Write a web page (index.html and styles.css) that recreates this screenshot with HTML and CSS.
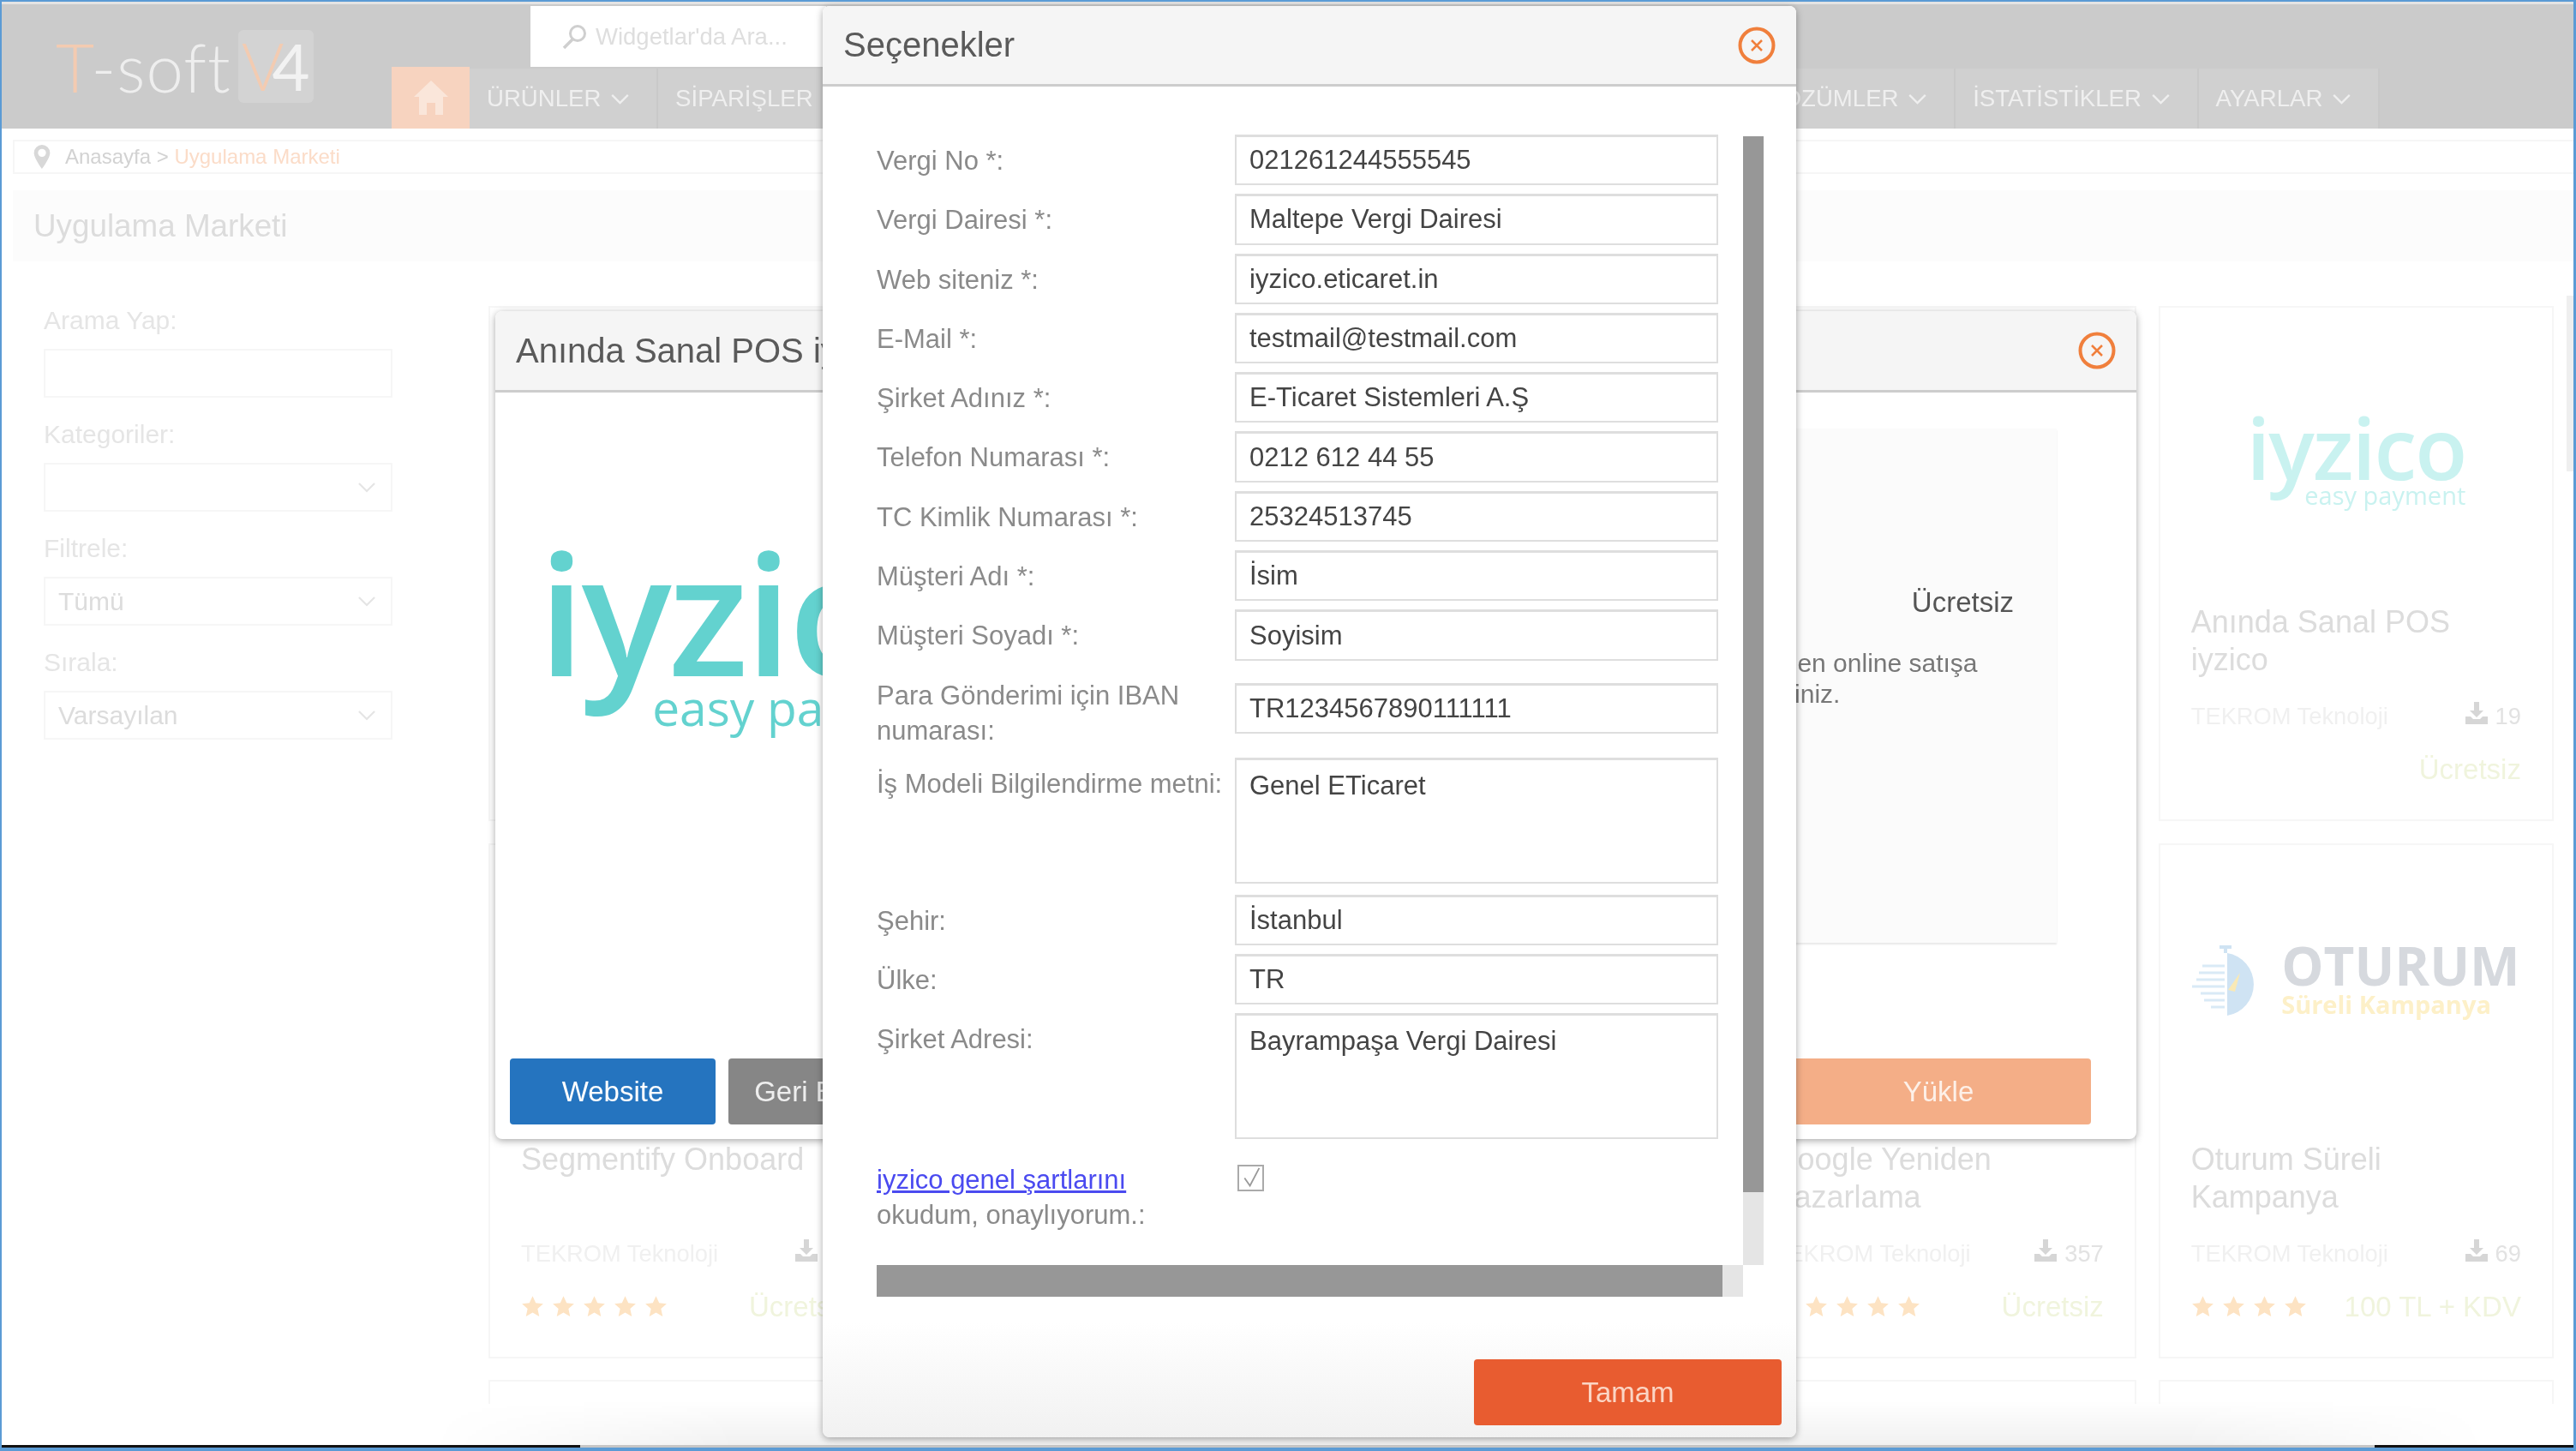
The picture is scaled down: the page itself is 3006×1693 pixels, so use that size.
FILE: index.html
```html
<!DOCTYPE html>
<html lang="tr">
  <head>
    <meta charset="UTF-8" />
    <title>Uygulama Marketi</title>
    <link rel="stylesheet" href="styles.css">
  </head>

  <body>
    <svg class="icon-defs" width="0" height="0">
      <symbol id="chevron" viewBox="0 0 22 14"><path d="M1 2l10 10L21 2" fill="none" stroke="currentColor" stroke-width="2.4"/></symbol>
      <symbol id="star" viewBox="0 0 24 24"><path d="M12 1l3.3 7.3 7.7.8-5.8 5.2 1.7 8L12 18.200l-6.900 4.100 1.700-8L1 9.100l7.700-.8z" fill="currentColor"/></symbol>
      <symbol id="download" viewBox="0 0 26 26"><path d="M10 0h6v10h5l-8 8-8-8h5zM0 17h6l3 3h8l3-3h6v9H0z" fill="currentColor"/></symbol>
      <symbol id="close" viewBox="0 0 44 44"><circle cx="22" cy="22" r="19.500" fill="none" stroke="currentColor" stroke-width="4"/><path d="M16 16l12 12M28 16L16 28" fill="none" stroke="currentColor" stroke-width="2.500"/></symbol>
    </svg>

    <div class="window">
      <header class="header">
        <div class="logo">
          <span class="logo-text"><span class="logo-t">T</span>-soft</span>
          <span class="logo-badge"><span class="logo-v">V</span><span class="logo-four">4</span></span>
        </div>
        <div class="header-right">
          <div class="search-row">
            <div class="search">
              <svg class="search-icon" viewBox="0 0 30 30"><circle cx="19" cy="11" r="8.500" fill="none" stroke="currentColor" stroke-width="3"/><path d="M13 18L3 28" stroke="currentColor" stroke-width="3.500"/></svg>
              <span>Widgetlar'da Ara...</span>
            </div>
          </div>
          <nav class="nav">
            <div class="nav-group">
              <a class="nav-home">
                <svg class="home-icon" viewBox="0 0 40 40"><path d="M20 0L40 19h-6v21h-9V26h-10v14H6V19H0z" fill="currentColor"/></svg>
              </a>
              <a class="nav-item">ÜRÜNLER <svg class="nav-chevron"><use href="#chevron"/></svg></a>
              <a class="nav-item">SİPARİŞLER <svg class="nav-chevron"><use href="#chevron"/></svg></a>
            </div>
            <div class="nav-group">
              <a class="nav-item">ÇÖZÜMLER <svg class="nav-chevron"><use href="#chevron"/></svg></a>
              <a class="nav-item">İSTATİSTİKLER <svg class="nav-chevron"><use href="#chevron"/></svg></a>
              <a class="nav-item">AYARLAR <svg class="nav-chevron"><use href="#chevron"/></svg></a>
            </div>
          </nav>
        </div>
      </header>

      <div class="breadcrumb">
        <svg class="pin" viewBox="0 0 20 30"><path d="M10 0a10 10 0 0 1 10 10c0 7-10 20-10 20S0 17 0 10A10 10 0 0 1 10 0zm0 5a5 5 0 1 0 0 10 5 5 0 0 0 0-10z" fill="currentColor"/></svg>
        <span>Anasayfa &gt; <span class="breadcrumb-current">Uygulama Marketi</span></span>
      </div>

      <div class="page-title">Uygulama Marketi</div>

      <main class="content">
        <aside class="sidebar">
          <div class="filter-label">Arama Yap:</div>
          <div class="filter-box"></div>
          <div class="filter-label">Kategoriler:</div>
          <div class="filter-box"><span></span><svg class="select-chevron"><use href="#chevron"/></svg></div>
          <div class="filter-label">Filtrele:</div>
          <div class="filter-box"><span>Tümü</span><svg class="select-chevron"><use href="#chevron"/></svg></div>
          <div class="filter-label">Sırala:</div>
          <div class="filter-box"><span>Varsayılan</span><svg class="select-chevron"><use href="#chevron"/></svg></div>
        </aside>

        <section class="cards">
          <article class="card"></article>
          <article class="card"></article>
          <article class="card"></article>
          <article class="card"></article>
          <article class="card">
            <div class="card-logo">
              <div class="iyzico iyzico-card">
                <div class="iyzico-name">iyzico</div>
                <div class="iyzico-sub">easy payment</div>
              </div>
            </div>
            <h3 class="card-title">Anında Sanal POS iyzico</h3>
            <div class="card-meta">
              <span>TEKROM Teknoloji</span>
              <span class="card-downloads"><svg class="download-icon"><use href="#download"/></svg>19</span>
            </div>
            <div class="card-bottom">
              <span></span>
              <span class="card-price">Ücretsiz</span>
            </div>
          </article>

          <article class="card">
            <div class="card-logo"></div>
            <h3 class="card-title">Segmentify Onboard</h3>
            <div class="card-meta">
              <span>TEKROM Teknoloji</span>
              <span class="card-downloads"><svg class="download-icon"><use href="#download"/></svg>12</span>
            </div>
            <div class="card-bottom">
              <span class="stars">
                <svg><use href="#star"/></svg><svg><use href="#star"/></svg><svg><use href="#star"/></svg><svg><use href="#star"/></svg><svg><use href="#star"/></svg>
              </span>
              <span class="card-price">Ücretsiz</span>
            </div>
          </article>
          <article class="card"></article>
          <article class="card"></article>
          <article class="card">
            <div class="card-logo"></div>
            <h3 class="card-title">Google Yeniden Pazarlama</h3>
            <div class="card-meta">
              <span>TEKROM Teknoloji</span>
              <span class="card-downloads"><svg class="download-icon"><use href="#download"/></svg>357</span>
            </div>
            <div class="card-bottom">
              <span class="stars">
                <svg><use href="#star"/></svg><svg><use href="#star"/></svg><svg><use href="#star"/></svg><svg><use href="#star"/></svg><svg><use href="#star"/></svg>
              </span>
              <span class="card-price">Ücretsiz</span>
            </div>
          </article>
          <article class="card">
            <div class="card-logo">
              <div class="oturum">
                <svg class="oturum-watch" viewBox="0 0 78 82">
                  <path d="M32 0h14v4h-5v5A37 37 0 0 1 41 82V9h-4V4h-5z" fill="#cfe3f3"/>
                  <path d="M5 40h33M0 48h38M8 32h30M12 24h26M10 56h28M14 64h24M22 72h16" stroke="#d9eaf6" stroke-width="3"/>
                  <path d="M42 52l14-20-6 22z" fill="#f9e9b5"/>
                </svg>
                <div>
                  <div class="oturum-name">OTURUM</div>
                  <div class="oturum-sub">Süreli Kampanya</div>
                </div>
              </div>
            </div>
            <h3 class="card-title">Oturum Süreli Kampanya</h3>
            <div class="card-meta">
              <span>TEKROM Teknoloji</span>
              <span class="card-downloads"><svg class="download-icon"><use href="#download"/></svg>69</span>
            </div>
            <div class="card-bottom">
              <span class="stars">
                <svg><use href="#star"/></svg><svg><use href="#star"/></svg><svg><use href="#star"/></svg><svg><use href="#star"/></svg>
              </span>
              <span class="card-price">100 TL + KDV</span>
            </div>
          </article>

          <article class="card"></article>
          <article class="card"></article>
          <article class="card"></article>
          <article class="card"></article>
          <article class="card"></article>
        </section>
      </main>

      <div class="page-fade"></div>
      <div class="dock-edge"><span class="dock-left"></span><span class="dock-right"></span></div>
      <div class="side-scroll"></div>

      <!-- app detail modal, under the options modal -->
      <div class="modal modal-app">
        <div class="modal-header">
          <span>Anında Sanal POS iyzico</span>
          <svg class="modal-close"><use href="#close"/></svg>
        </div>
        <div class="app-body">
          <div class="iyzico iyzico-large">
            <div class="iyzico-name">iyzico</div>
            <div class="iyzico-sub">easy payment</div>
          </div>
          <div class="app-info">
            <div class="app-price">Ücretsiz</div>
            <p class="app-text">POS ile hemen online satışa<br>başlayabilirsiniz.</p>
          </div>
        </div>
        <div class="app-buttons">
          <div class="app-buttons-left">
            <a class="btn btn-blue">Website</a>
            <a class="btn btn-gray">Geri Bildirim</a>
          </div>
          <a class="btn btn-peach">Yükle</a>
        </div>
      </div>

      <!-- options modal -->
      <div class="modal modal-options">
        <div class="modal-header">
          <span>Seçenekler</span>
          <svg class="modal-close"><use href="#close"/></svg>
        </div>
        <div class="options-body">
          <div class="options-scroll">
            <form class="options-form">
              <div class="row"><label>Vergi No *:</label><input value="021261244555545"></div>
              <div class="row"><label>Vergi Dairesi *:</label><input value="Maltepe Vergi Dairesi"></div>
              <div class="row"><label>Web siteniz *:</label><input value="iyzico.eticaret.in"></div>
              <div class="row"><label>E-Mail *:</label><input value="testmail@testmail.com"></div>
              <div class="row"><label>Şirket Adınız *:</label><input value="E-Ticaret Sistemleri A.Ş"></div>
              <div class="row"><label>Telefon Numarası *:</label><input value="0212 612 44 55"></div>
              <div class="row"><label>TC Kimlik Numarası *:</label><input value="25324513745"></div>
              <div class="row"><label>Müşteri Adı *:</label><input value="İsim"></div>
              <div class="row"><label>Müşteri Soyadı *:</label><input value="Soyisim"></div>
              <div class="row row-iban"><label>Para Gönderimi için IBAN numarası:</label><input value="TR1234567890111111"></div>
              <div class="row row-model"><label>İş Modeli Bilgilendirme metni:</label><textarea>Genel ETicaret</textarea></div>
              <div class="row"><label>Şehir:</label><input value="İstanbul"></div>
              <div class="row"><label>Ülke:</label><input value="TR"></div>
              <div class="row"><label>Şirket Adresi:</label><textarea>Bayrampaşa Vergi Dairesi</textarea></div>
              <div class="row row-terms">
                <label><a class="terms-link">iyzico genel şartlarını</a><br>okudum, onaylıyorum.:</label>
                <span class="check">
                  <svg viewBox="0 0 30 30"><path d="M7 15l7 10L26 2" fill="none" stroke="currentColor" stroke-width="2"/></svg>
                </span>
              </div>
            </form>
            <div class="vbar"><div class="vbar-thumb"></div></div>
            <div class="hbar"><div class="hbar-thumb"></div></div>
          </div>
        </div>
        <div class="options-footer">
          <a class="btn btn-orange">Tamam</a>
        </div>
      </div>
    </div>
  </body>
</html>
```

FILE: styles.css
```css
* {
  box-sizing: border-box;
}

body {
  margin: 0;
  font-family: "Liberation Sans", Arial, sans-serif;
  background: #fff;
}

.icon-defs {
  position: absolute;
}

.window {
  position: relative;
  width: 3006px;
  height: 1693px;
  overflow: hidden;
  background: #fff;
  border-top: 2px solid #5b9bd5;
  border-left: 2px solid #5b9bd5;
  border-right: 3px solid #5b9bd5;
  border-bottom: 4px solid #5b9bd5;
  filter: blur(0.7px);
}

/* header */
.header {
  display: flex;
  height: 148px;
  background: #cbcbcb;
  border-top: 3px solid #e4e4e4;
}

.logo {
  width: 455px;
  display: flex;
  align-items: flex-start;
  padding: 28px 0 0 63px;
  gap: 8px;
}

.logo-text {
  font-family: Lato, sans-serif;
  font-weight: 300;
  font-size: 78px;
  line-height: 90px;
  letter-spacing: 1px;
  color: #eee;
}

.logo-t,
.logo-v {
  color: #f3cbb1;
}

.logo-badge {
  display: flex;
  justify-content: center;
  width: 88px;
  height: 85px;
  margin-top: 2px;
  background: #d3d3d3;
  border-radius: 6px;
  font-family: Lato, sans-serif;
  font-size: 76px;
  line-height: 84px;
}

.logo-v {
  font-weight: 300;
}

.logo-four {
  color: #f2f2f2;
  margin-left: -14px;
}

.header-right {
  flex: 1;
  display: flex;
  flex-direction: column;
}

.search-row {
  height: 75px;
  padding: 2px 0 0 162px;
}

.search {
  width: 345px;
  height: 71px;
  background: #fff;
  display: flex;
  align-items: center;
  gap: 10px;
  padding-left: 36px;
  font-size: 27.500px;
  color: #dedede;
}

.search-icon {
  width: 30px;
  height: 30px;
  color: #cfcfcf;
}

.nav {
  width: 2320px;
  height: 70px;
  display: flex;
  justify-content: space-between;
}

.nav-group {
  display: flex;
}

.nav-home {
  width: 91px;
  margin-top: -2px;
  display: flex;
  align-items: center;
  justify-content: center;
  background: #f7d3bf;
  color: #fae6da;
}

.home-icon {
  width: 40px;
  height: 40px;
}

.nav-item {
  display: flex;
  align-items: center;
  padding: 0 32px 0 20px;
  background: #d0d0d0;
  border-right: 2px solid #c9c9c9;
  font-size: 27.600px;
  color: #efefef;
  white-space: pre;
}

.nav-chevron {
  width: 21px;
  height: 13px;
  margin-left: 4px;
  color: #efefef;
}

/* breadcrumb and title */
.breadcrumb {
  display: flex;
  align-items: center;
  gap: 17px;
  height: 40px;
  margin: 13px 0 0 13px;
  padding-left: 22px;
  border: 2px solid #f6f6f6;
  border-right: none;
  font-size: 24px;
  color: #d2d2d2;
}

.pin {
  width: 20px;
  height: 28px;
  color: #d8d8d8;
}

.breadcrumb-current {
  color: #fbdcc8;
}

.page-title {
  height: 83px;
  margin: 19px 0 0 13px;
  padding-left: 24px;
  background: #fcfcfc;
  font-size: 36.800px;
  line-height: 84px;
  color: #dcdcdc;
}

/* sidebar and cards */
.content {
  display: flex;
  gap: 112px;
  padding: 52px 0 0 49px;
}

.sidebar {
  width: 407px;
  flex: none;
}

.filter-label {
  height: 34px;
  margin-bottom: 16px;
  font-size: 30px;
  line-height: 34px;
  color: #e5e5e5;
}

.filter-box {
  display: flex;
  align-items: center;
  justify-content: space-between;
  height: 57px;
  margin-bottom: 26px;
  padding: 0 18px 0 15px;
  border: 2px solid #f6f6f6;
  font-size: 30px;
  color: #dcdcdc;
}

.select-chevron {
  width: 20px;
  height: 13px;
  color: #e5e5e5;
}

.cards {
  display: grid;
  grid-template-columns: repeat(5, 461.200px);
  grid-auto-rows: 601px;
  column-gap: 26px;
  row-gap: 25.500px;
  width: 2410px;
  height: 1281px;
  overflow: hidden;
}

.card {
  border: 2px solid #f6f6f6;
  padding: 0 36px;
}

.card-logo {
  display: flex;
  align-items: center;
  justify-content: center;
  height: 345px;
}

.card-title {
  height: 88px;
  margin: 0;
  font-size: 36px;
  font-weight: 400;
  line-height: 44px;
  color: #dcdcdc;
}

.card-meta {
  display: flex;
  align-items: center;
  justify-content: space-between;
  height: 30px;
  margin-top: 29px;
  font-size: 27.300px;
  color: #f0f0f0;
}

.card-downloads {
  display: flex;
  align-items: center;
  gap: 9px;
  color: #e2e2e2;
}

.download-icon {
  width: 26px;
  height: 26px;
  margin-top: -8px;
  color: #d6d6d6;
}

.card-bottom {
  display: flex;
  align-items: center;
  justify-content: space-between;
  height: 40px;
  margin-top: 27px;
}

.stars {
  display: flex;
  gap: 9px;
  color: #fde3c3;
}

.stars svg {
  width: 27px;
  height: 27px;
}

.card-price {
  font-size: 33px;
  color: #f0f4dd;
}

/* logos */
.iyzico {
  display: inline-flex;
  flex-direction: column;
  align-items: flex-end;
  font-family: "Open Sans", sans-serif;
}

.iyzico-name {
  font-weight: 600;
  line-height: 1;
  letter-spacing: -0.02em;
}

.iyzico-sub {
  font-size: 0.29em;
  line-height: 1;
  margin-top: -0.25em;
}

.iyzico-card {
  font-size: 100px;
  color: #c9f2f0;
}

.iyzico-large {
  flex: none;
  font-size: 196px;
  color: #63d2cf;
}

.oturum {
  display: flex;
  align-items: center;
  gap: 26px;
  margin-bottom: 28px;
}

.oturum-watch {
  width: 78px;
  height: 82px;
}

.oturum-name {
  font-family: "Open Sans", sans-serif;
  font-size: 62px;
  font-weight: 700;
  line-height: 56px;
  color: #d6d9de;
}

.oturum-sub {
  font-family: "Open Sans", sans-serif;
  font-size: 29px;
  font-weight: 700;
  line-height: 36px;
  color: #fdf0c8;
}

/* modals */
.modal {
  position: absolute;
  background: #fff;
  border-radius: 8px;
  box-shadow: 0 2px 8px rgba(0, 0, 0, 0.35);
}

.modal-header {
  display: flex;
  align-items: center;
  justify-content: space-between;
  background: #f5f5f5;
  border-radius: 8px 8px 0 0;
  border-bottom: 3px solid #cdcdcd;
  padding: 0 24px;
  font-size: 40px;
  color: #5a5a5a;
}

.modal-close {
  width: 44px;
  height: 44px;
  color: #f07f3c;
}

.btn {
  display: flex;
  align-items: center;
  justify-content: center;
  height: 77px;
  border-radius: 4px;
  font-size: 33px;
  color: #fff;
}

.btn-blue {
  width: 240px;
  background: #2574bf;
}

.btn-gray {
  width: 240px;
  background: #868686;
  color: #eee;
}

.btn-peach {
  width: 356px;
  background: #f4ae87;
  color: #fdf0e8;
}

.btn-orange {
  width: 359px;
  background: #e85c30;
  color: #fbd5c4;
}

/* app detail modal */
.modal-app {
  left: 576px;
  top: 361px;
  width: 1915px;
  height: 966px;
  display: flex;
  flex-direction: column;
}

.modal-app .modal-header {
  height: 95px;
}

.app-body {
  position: relative;
  flex: 1;
  display: flex;
  justify-content: space-between;
  padding: 42px 93px 0 50px;
}

.iyzico-large {
  margin-top: 115px;
  align-self: flex-start;
}

.app-info {
  width: 498px;
  height: 600px;
  background: #fbfbfb;
  box-shadow: 0 2px 2px #e8e8e8;
  padding: 183px 50px 0 27px;
}

.app-price {
  font-size: 33px;
  line-height: 40px;
  text-align: right;
  color: #555;
}

.app-text {
  margin: 33px 0 0;
  font-size: 30px;
  line-height: 36px;
  white-space: nowrap;
  color: #777;
}

.app-buttons {
  display: flex;
  justify-content: space-between;
  padding: 0 53px 17px 17px;
}

.app-buttons-left {
  display: flex;
  gap: 15px;
}

/* options modal */
.modal-options {
  left: 958px;
  top: 5px;
  width: 1136px;
  height: 1670px;
  background: linear-gradient(#fff 92%, #f1f1f1);
}

.modal-options .modal-header {
  height: 94px;
}

.options-body {
  padding: 56px 38px 0 63px;
}

.options-scroll {
  display: grid;
  grid-template-columns: 1011px 24px;
  grid-template-rows: 1319px 37px;
}

.options-form {
  height: 1319px;
  overflow: hidden;
}

.row {
  display: flex;
  align-items: flex-start;
  margin-bottom: 10px;
  font-size: 31px;
}

.row label {
  width: 418px;
  flex: none;
  padding-top: 10px;
  line-height: 41px;
  color: #8a8a8a;
}

.row input,
.row textarea {
  display: block;
  width: 564px;
  height: 59.300px;
  padding: 0 15px;
  border: 2px solid #dedede;
  border-top-width: 3px;
  font-family: "Liberation Sans", Arial, sans-serif;
  font-size: 31px;
  color: #444;
  background: #fff;
  outline: none;
}

.row textarea {
  height: 147px;
  padding-top: 12px;
  line-height: 36px;
  resize: none;
}

.row-iban input {
  margin-top: 16px;
}

.row-model {
  margin-top: 11px;
  margin-bottom: 13px;
}

.row-terms {
  margin-top: 27px;
}

.row-terms label {
  padding-top: 0;
}

.terms-link {
  color: #4a4af0;
  text-decoration: underline;
}

.check {
  display: block;
  width: 31px;
  height: 31px;
  margin: 3px 0 0 3px;
  border: 2px solid #aaa;
  color: #999;
}

.check svg {
  display: block;
  width: 27px;
  height: 27px;
}

.vbar {
  margin-top: 2px;
  background: #e5e5e5;
}

.vbar-thumb {
  height: 1232px;
  background: #979797;
}

.hbar {
  background: #e5e5e5;
}

.hbar-thumb {
  width: 987px;
  height: 100%;
  background: #979797;
}

.options-footer {
  display: flex;
  justify-content: flex-end;
  margin-top: 73px;
  padding-right: 17px;
}

/* window chrome */
.side-scroll {
  position: absolute;
  right: 0;
  top: 343px;
  width: 8px;
  height: 205px;
  background: #efefef;
}

.page-fade {
  position: absolute;
  left: 500px;
  right: 100px;
  bottom: 0;
  height: 55px;
  background: linear-gradient(rgba(0, 0, 0, 0), rgba(0, 0, 0, 0.06));
  -webkit-mask-image: linear-gradient(90deg, transparent, #000 15%, #000 85%, transparent);
  mask-image: linear-gradient(90deg, transparent, #000 15%, #000 85%, transparent);
}

.dock-edge {
  position: absolute;
  left: 0;
  right: 0;
  bottom: 0;
  height: 3px;
  display: flex;
  justify-content: space-between;
  background: #c6c6c6;
}

.dock-left {
  width: 675px;
  background: #111;
}

.dock-right {
  width: 232px;
  background: #111;
}
```
